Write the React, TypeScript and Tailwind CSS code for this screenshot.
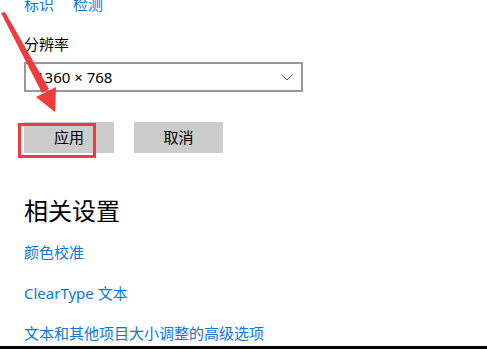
import React from "react";

const cjk = { fontFamily: '"Noto Sans", "Noto Sans CJK SC", sans-serif' };

export default function App() {
  return (
    <div
      className="relative w-[487px] h-[349px] overflow-hidden bg-white border-b-[3px] border-black box-border"
      style={cjk}
    >
      <div className="pl-[24px]">
        <div className="-mt-[6px] flex h-[20px] items-center gap-[19px] text-[15px] leading-[20px] text-[#0a78d7]">
          <span>标识</span>
          <span>检测</span>
        </div>
        <div className="mt-[20px] h-[20px] text-[15px] leading-[20px] text-black">分辨率</div>
        <div className="mt-[8px] flex h-[30px] w-[279px] items-center justify-between border-2 border-[#999999] pl-[10px] pr-[8px] text-[15px] leading-[20px] text-black">
          <span>1360 × 768</span>
          <svg width="12" height="7" viewBox="0 0 12 7" fill="none">
            <path d="M0.5 0.5 L6 6 L11.5 0.5" stroke="#555" strokeWidth="1" />
          </svg>
        </div>
        <div className="mt-[30px] flex gap-[20px]">
          <div className="flex h-[31px] w-[90px] items-center justify-center bg-[#cccccc] text-[15px] text-black">应用</div>
          <div className="flex h-[31px] w-[89px] items-center justify-center bg-[#cccccc] text-[15px] text-black">取消</div>
        </div>
        <div className="mt-[42px] h-[32px] text-[24px] leading-[32px] text-black">相关设置</div>
        <div className="mt-[15px] h-[20px] text-[15px] leading-[20px] text-[#0a78d7]">颜色校准</div>
        <div className="mt-[21px] h-[20px] text-[15px] leading-[20px] text-[#0a78d7]">ClearType 文本</div>
        <div className="mt-[20px] h-[20px] text-[15px] leading-[20px] text-[#0a78d7]">文本和其他项目大小调整的高级选项</div>
      </div>

      <div className="absolute left-[18px] top-[123px] h-[35px] w-[78px] border-[3px] border-[#ef3b3b]" />

      <svg className="absolute left-0 top-0" width="70" height="120" viewBox="0 0 70 120">
        <polygon points="1,13 5,12 49,89 42,93" fill="#ef3b3b" />
        <polygon points="36,97 56,87 55,112" fill="#ef3b3b" />
      </svg>
    </div>
  );
}
